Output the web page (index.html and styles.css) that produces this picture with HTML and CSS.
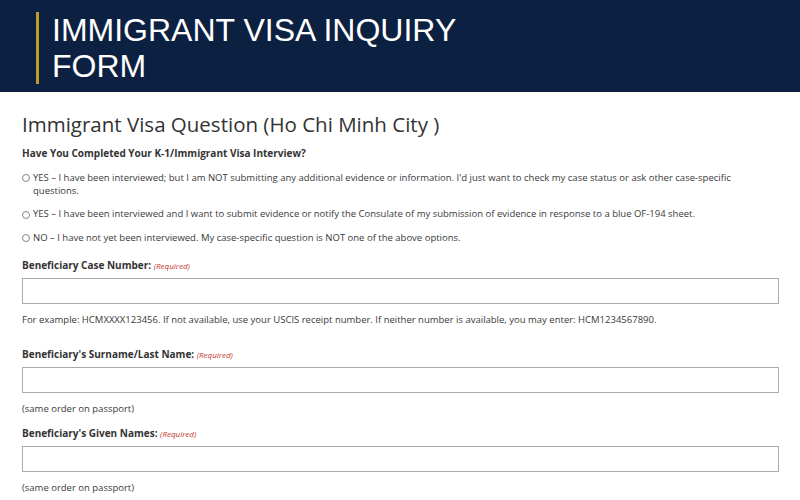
FILE: index.html
```html
<!DOCTYPE html>
<html>
<head>
<meta charset="utf-8">
<link rel="stylesheet" href="styles.css">
</head>
<body>
<header class="banner">
  <h1 class="banner-title">IMMIGRANT VISA INQUIRY<br>FORM</h1>
</header>
<main class="form">
  <h2 class="form-title">Immigrant Visa Question (Ho Chi Minh City )</h2>
  <div class="question">Have You Completed Your K-1/Immigrant Visa Interview?</div>
  <label class="option"><span class="radio"></span><span>YES – I have been interviewed; but I am NOT submitting any additional evidence or information. I'd just want to check my case status or ask other case-specific questions.</span></label>
  <label class="option"><span class="radio"></span><span>YES – I have been interviewed and I want to submit evidence or notify the Consulate of my submission of evidence in response to a blue OF-194 sheet.</span></label>
  <label class="option"><span class="radio"></span><span>NO – I have not yet been interviewed. My case-specific question is NOT one of the above options.</span></label>

  <div class="field field-1">
    <div class="label">Beneficiary Case Number: <span class="req">(Required)</span></div>
    <div class="input"></div>
    <div class="hint">For example: HCMXXXX123456. If not available, use your USCIS receipt number. If neither number is available, you may enter: HCM1234567890.</div>
  </div>
  <div class="field field-2">
    <div class="label">Beneficiary's Surname/Last Name: <span class="req">(Required)</span></div>
    <div class="input"></div>
    <div class="hint">(same order on passport)</div>
  </div>
  <div class="field field-3">
    <div class="label">Beneficiary's Given Names: <span class="req">(Required)</span></div>
    <div class="input"></div>
    <div class="hint">(same order on passport)</div>
  </div>
</main>
</body>
</html>
```
FILE: styles.css
```css
html, body {
  margin: 0;
  padding: 0;
  background: #ffffff;
}
body {
  font-family: "Open Sans", "Liberation Sans", sans-serif;
  color: #333333;
  overflow: hidden;
}
.banner {
  background: #0c2142;
  height: 92px;
  padding: 12px 0 0 36px;
  box-sizing: border-box;
}
.banner-title {
  margin: 0;
  border-left: 3px solid #c39a2a;
  padding-left: 13px;
  font-family: "Liberation Sans", Arial, sans-serif;
  font-weight: normal;
  font-size: 32px;
  line-height: 36px;
  color: #ffffff;
  height: 72px;
}
.form {
  padding: 0 21px 0 22px;
}
.form-title {
  margin: 18px 0 0;
  font-weight: normal;
  font-size: 20.5px;
  line-height: 28px;
  color: #333;
}
.question {
  margin-top: 8px;
  font-weight: bold;
  font-size: 10px;
  line-height: 14px;
}
.option {
  display: flex;
  gap: 3px;
  font-size: 9.5px;
  line-height: 13px;
  margin-top: 10.5px;
  color: #3a3a3a;
}
.radio {
  flex: none;
  width: 6px;
  height: 6px;
  border: 1px solid #888;
  border-radius: 50%;
  margin-top: 3.5px;
}
.label {
  font-weight: bold;
  font-size: 10px;
  line-height: 14px;
}
.req {
  font-weight: normal;
  font-style: italic;
  font-size: 8px;
  color: #c0392b;
}
.input {
  margin-top: 5px;
  height: 24px;
  border: 1px solid #aaaaaa;
}
.hint {
  margin-top: 9px;
  font-size: 9.5px;
  line-height: 14px;
  color: #3a3a3a;
}
.field-1 {
  margin-top: 14px;
}
.field-2 {
  margin-top: 20px;
}
.field-3 {
  margin-top: 10px;
}
```
